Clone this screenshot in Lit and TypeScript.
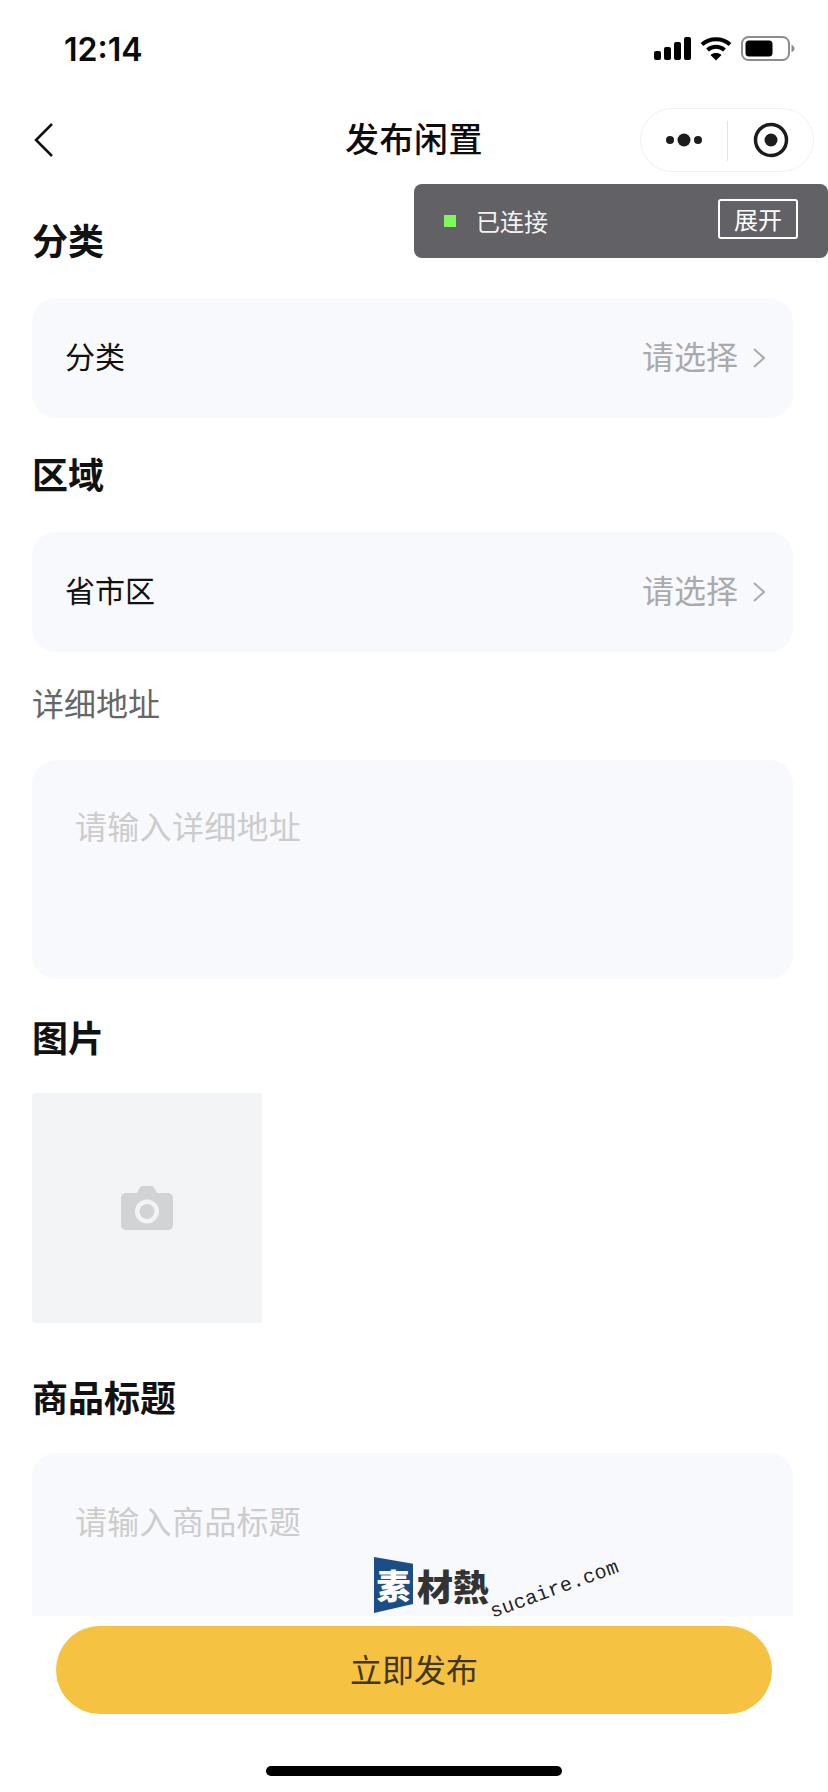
import { LitElement, html, css } from "lit";
import { customElement } from "lit/decorators.js";

@customElement("app-root")
export class AppRoot extends LitElement {
  static styles = css`
    :host {
      display: block;
      position: relative;
      width: 828px;
      height: 1792px;
      overflow: hidden;
      background: #fff;
      font-family: "Noto Sans CJK SC", "Noto Sans", sans-serif;
      color: #111;
    }
    .status {
      height: 88px;
      display: flex;
      align-items: flex-start;
      justify-content: space-between;
      box-sizing: border-box;
      padding: 0 33px 0 64px;
    }
    .time {
      font-family: Inter, Roboto, sans-serif;
      font-weight: 600;
      font-size: 32px;
      line-height: 38px;
      margin-top: 31px;
      color: #0a0a0a;
    }
    .icons { display: flex; gap: 9px; margin-top: 36px; }
    .icons svg { display: block; }
    .nav {
      height: 104px;
      display: flex;
      align-items: center;
      justify-content: space-between;
      position: relative;
      padding: 0 14px 0 33px;
    }
    .nav-title {
      position: absolute;
      left: 0;
      right: 0;
      top: 26px;
      text-align: center;
      font-size: 34px;
      letter-spacing: 0.5px;
      font-weight: 500;
      line-height: 48px;
      color: #0c0c0c;
    }
    .capsule {
      width: 174px;
      height: 64px;
      box-sizing: border-box;
      border: 1px solid #f1f1f1;
      border-radius: 32px;
      background: #fff;
      display: block;
    }
    .capsule svg { display: block; }
    .form {
      padding: 23px 35px 0 32px;
      display: flex;
      flex-direction: column;
    }
    .title {
      font-size: 36px;
      font-weight: 700;
      line-height: 48px;
      color: #111;
      margin: 0 0 35px;
    }
    .title.next { margin-top: 31px; margin-bottom: 35px; }
    .title.after-area { margin-top: 33px; margin-bottom: 33px; }
    .title.after-img { margin-top: 49px; margin-bottom: 33px; }
    .row {
      height: 120px;
      border-radius: 24px;
      background: #f8f9fd;
      display: flex;
      align-items: center;
      justify-content: space-between;
      padding: 0 27px 0 33px;
    }
    .row-label { font-size: 30px; line-height: 40px; color: #111; margin-top: -6px; }
    .row-value {
      display: flex;
      align-items: center;
      gap: 14px;
      font-size: 32px;
      line-height: 40px;
      color: #aaa;
    }
    .row-value span { margin-top: -6px; }
    .sub {
      font-size: 32px;
      line-height: 48px;
      color: #666;
      margin: 26px 0 34px;
    }
    .area {
      height: 219px;
      box-sizing: border-box;
      border-radius: 24px;
      background: #f8f9fd;
      padding: 41px 40px 0 43px;
      font-size: 32px;
      letter-spacing: 0.3px;
      line-height: 48px;
      color: #ccc;
    }
    .input { height: 200px; padding-top: 43px; }
    .photo {
      width: 230px;
      height: 230px;
      border-radius: 4px;
      background: #f3f4f6;
      display: flex;
      align-items: center;
      justify-content: center;
    }
    .footer {
      position: absolute;
      left: 0;
      right: 0;
      top: 1616px;
      bottom: 0;
      background: #fff;
      display: flex;
      flex-direction: column;
      align-items: center;
    }
    .btn {
      width: 716px;
      height: 88px;
      margin-top: 10px;
      border-radius: 44px;
      background: #f5c242;
      display: flex;
      align-items: center;
      justify-content: center;
      box-sizing: border-box;
      padding-bottom: 4px;
      font-size: 32px;
      color: #43361a;
    }
    .home {
      width: 296px;
      height: 10px;
      border-radius: 5px;
      background: #000;
      margin-top: 52px;
    }
    .toast {
      position: absolute;
      left: 414px;
      top: 184px;
      width: 414px;
      height: 74px;
      box-sizing: border-box;
      background: #616166;
      border-radius: 8px;
      display: flex;
      align-items: center;
      padding: 0 30px;
      color: #fff;
      font-size: 24px;
    }
    .dot { width: 12px; height: 12px; background: #7dfa5a; margin-right: 20px; }
    .toast-text { flex: 1; color: #f2f2f2; margin-top: -2px; }
    .toast-btn {
      width: 80px;
      height: 40px;
      box-sizing: border-box;
      margin-top: -4px;
      border: 2px solid #fff;
      border-radius: 3px;
      display: flex;
      align-items: center;
      justify-content: center;
      line-height: 1;
    }
    .mark {
      position: absolute;
      left: 374px;
      top: 1557px;
      width: 250px;
      height: 70px;
      display: flex;
    }
    .mark-logo {
      width: 39px;
      height: 56px;
      background: #1b4d86;
      clip-path: polygon(0 0, 100% 12%, 100% 84%, 0 100%);
      color: #fff;
      font-size: 34px;
      font-weight: 900;
      display: flex;
      align-items: center;
      justify-content: center;
      line-height: 1;
    }
    .mark-name {
      margin-left: 4px;
      margin-top: 5px;
      font-size: 36px;
      font-weight: 900;
      line-height: 46px;
      color: #333;
      white-space: nowrap;
    }
    .mark-url {
      position: absolute;
      left: 113px;
      top: 21px;
      font-family: "Liberation Mono", monospace;
      font-size: 20px;
      letter-spacing: 0.3px;
      line-height: 24px;
      color: #222;
      white-space: nowrap;
      transform: rotate(-20deg);
    }
  `;

  private chevron() {
    return html`<svg width="14" height="22" viewBox="0 0 14 22" fill="none"><path d="M2 2l10 9-10 9" stroke="#aaa" stroke-width="2" /></svg>`;
  }

  private row(label: string) {
    return html`<div class="row">
      <span class="row-label">${label}</span>
      <span class="row-value"><span>请选择</span>${this.chevron()}</span>
    </div>`;
  }

  render() {
    return html`
      <div class="status">
        <div class="time">12:14</div>
        <div class="icons">
          <svg width="38" height="26" viewBox="0 0 38 26">
            <rect x="1" y="15" width="7" height="9" rx="2" />
            <rect x="11" y="11" width="7" height="13" rx="2" />
            <rect x="21" y="6" width="7" height="18" rx="2" />
            <rect x="31" y="1" width="7" height="23" rx="2" />
          </svg>
          <svg width="32" height="26" viewBox="0 0 32 26" fill="none" stroke="#000" stroke-width="4">
            <path d="M2 8.5C9.5 1.5 22.5 1.5 30 8.5" />
            <path d="M7.5 14c4.8-4.2 12.2-4.2 17 0" />
            <path d="M16 24.5l-5.5-5.6c3.2-2.4 7.8-2.4 11 0z" fill="#000" stroke="none" />
          </svg>
          <svg width="54" height="26" viewBox="0 0 54 26">
            <rect x="1" y="1" width="47" height="23" rx="6.5" fill="none" stroke="#8c8c8c" stroke-width="2" />
            <rect x="4.5" y="4.5" width="27" height="16" rx="3.5" fill="#000" />
            <path d="M50.5 9c2 .5 3 2 3 3.5s-1 3-3 3.5z" fill="#8c8c8c" />
          </svg>
        </div>
      </div>

      <div class="nav">
        <svg width="22" height="36" viewBox="0 0 22 36" fill="none">
          <path d="M19 2L3 18l16 16" stroke="#111" stroke-width="2.500" />
        </svg>
        <div class="nav-title">发布闲置</div>
        <div class="capsule">
          <svg width="172" height="62" viewBox="0 0 172 62">
            <circle cx="29" cy="31" r="4" fill="#1c1c1c" />
            <circle cx="43" cy="31" r="6.5" fill="#1c1c1c" />
            <circle cx="57" cy="31" r="4" fill="#1c1c1c" />
            <rect x="86" y="12" width="1" height="40" fill="#e3e3e3" />
            <circle cx="130" cy="31" r="15.5" fill="none" stroke="#1c1c1c" stroke-width="3.5" />
            <circle cx="130" cy="31" r="6.5" fill="#1c1c1c" />
          </svg>
        </div>
      </div>

      <div class="form">
        <div class="title">分类</div>
        ${this.row("分类")}
        <div class="title next">区域</div>
        ${this.row("省市区")}
        <div class="sub">详细地址</div>
        <div class="area">请输入详细地址</div>
        <div class="title after-area">图片</div>
        <div class="photo">
          <svg width="52" height="44" viewBox="0 0 52 44">
            <path
              fill="#d2d3d5"
              fill-rule="evenodd"
              d="M5 7h11l3-5.5c.5-1 1.300-1.500 2.400-1.500h9.200c1.100 0 1.900.5 2.400 1.500L36 7h11c2.800 0 5 2.200 5 5v27c0 2.800-2.200 5-5 5H5c-2.800 0-5-2.200-5-5V12c0-2.800 2.200-5 5-5zm21 6.500a12 12 0 1 0 0 24 12 12 0 0 0 0-24z"
            />
            <circle cx="26" cy="25.500" r="7.500" fill="#d2d3d5" />
          </svg>
        </div>
        <div class="title after-img">商品标题</div>
        <div class="area input">请输入商品标题</div>
      </div>

      <div class="footer">
        <div class="btn">立即发布</div>
        <div class="home"></div>
      </div>

      <div class="toast">
        <span class="dot"></span>
        <span class="toast-text">已连接</span>
        <span class="toast-btn">展开</span>
      </div>

      <div class="mark">
        <div class="mark-logo">素</div>
        <div class="mark-name">材熱</div>
        <div class="mark-url">sucaire.com</div>
      </div>
    `;
  }
}
